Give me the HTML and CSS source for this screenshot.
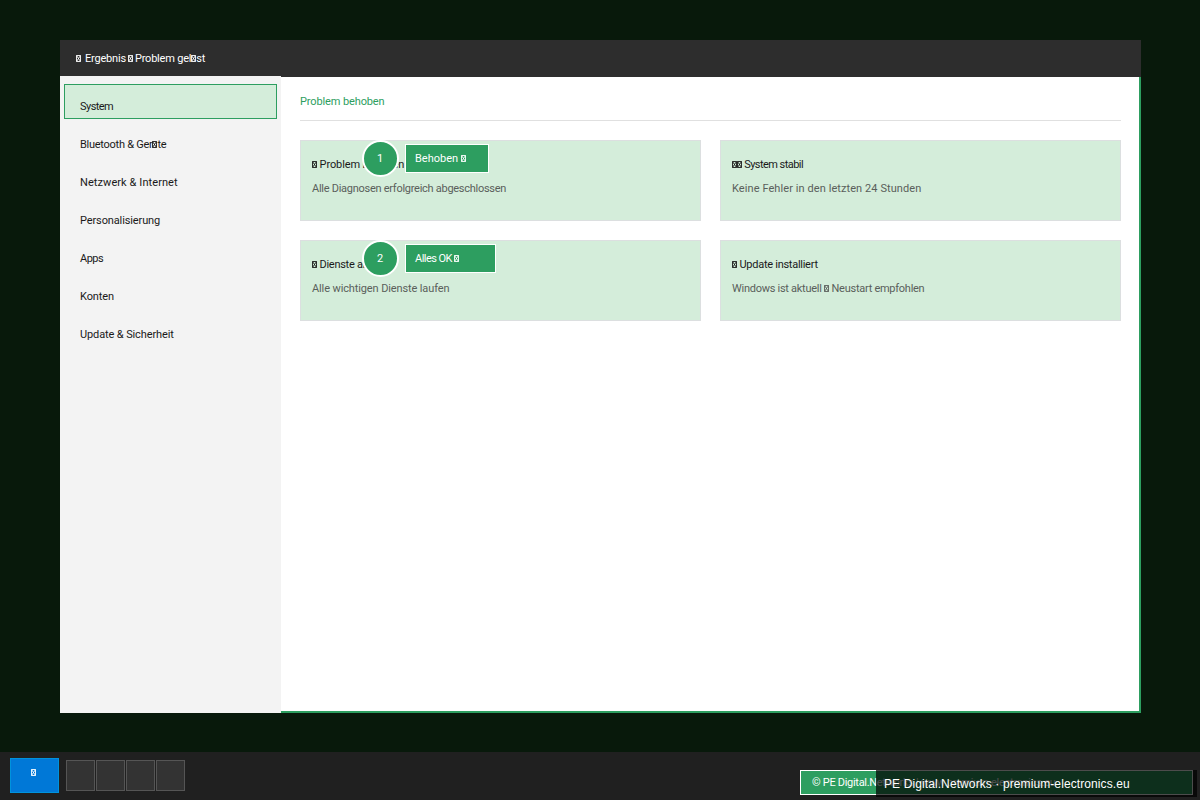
FILE: index.html
```html
<!DOCTYPE html>
<html lang="de">
<head>
    <meta charset="UTF-8">
    <meta name="viewport" content="width=device-width, initial-scale=1.0">
    <title>Problem gelöst</title>
    <link rel="stylesheet" href="styles.css">
</head>
<body>
    <svg class="defs">
        <symbol id="box" viewBox="0 0 5 7">
            <path d="M.5 .5h4v6h-4zM.5 .5l4 6M4.5 .5l-4 6" fill="none" stroke="currentColor" stroke-width=".9"/>
        </symbol>
    </svg>

    <div class="desktop">
        <div class="window">
            <div class="titlebar"><svg class="box lead"><use href="#box"/></svg>Ergebnis<svg class="box gap"><use href="#box"/></svg>Problem gel<svg class="box"><use href="#box"/></svg>st</div>
            <div class="window-body">
                <ul class="sidebar">
                    <li class="active tightest">System</li>
                    <li class="tighter">Bluetooth &amp; Ger<svg class="box"><use href="#box"/></svg>te</li>
                    <li class="loose">Netzwerk &amp; Internet</li>
                    <li class="tight">Personalisierung</li>
                    <li class="tightest">Apps</li>
                    <li class="tight">Konten</li>
                    <li class="tight">Update &amp; Sicherheit</li>
                </ul>
                <div class="content">
                    <h1 class="tight">Problem behoben</h1>
                    <div class="cards">
                        <div class="card">
                            <h2 class="tight"><svg class="box"><use href="#box"/></svg> Problem behoben</h2>
                            <p class="tighter">Alle Diagnosen erfolgreich abgeschlossen</p>
                            <div class="step"><span class="num">1</span><span class="label">Behoben <svg class="box"><use href="#box"/></svg></span></div>
                        </div>
                        <div class="card">
                            <h2 class="tightest"><svg class="box"><use href="#box"/></svg><svg class="box"><use href="#box"/></svg> System stabil</h2>
                            <p class="loose">Keine Fehler in den letzten 24 Stunden</p>
                        </div>
                        <div class="card">
                            <h2 class="tighter"><svg class="box"><use href="#box"/></svg> Dienste aktiv</h2>
                            <p class="tight">Alle wichtigen Dienste laufen</p>
                            <div class="step"><span class="num">2</span><span class="label wide tightest">Alles OK <svg class="box"><use href="#box"/></svg></span></div>
                        </div>
                        <div class="card">
                            <h2 class="tighter"><svg class="box"><use href="#box"/></svg> Update installiert</h2>
                            <p class="tighter">Windows ist aktuell <svg class="box"><use href="#box"/></svg> Neustart empfohlen</p>
                        </div>
                    </div>
                </div>
            </div>
        </div>
    </div>

    <div class="taskbar">
        <div class="start"><svg class="box"><use href="#box"/></svg></div>
        <div class="apps">
            <span></span>
            <span></span>
            <span></span>
            <span></span>
        </div>
        <div class="copyright">
            © PE Digital.Networks | www.premium-electronics.eu
            <div class="watermark">PE Digital.Networks · premium-electronics.eu</div>
        </div>
    </div>
</body>
</html>
```
FILE: styles.css
```css
*{
    margin: 0;
    padding: 0;
    box-sizing: border-box;
}

body{
    width: 1200px;
    height: 800px;
    overflow: hidden;
    display: flex;
    flex-direction: column;
    background: #08190b;
    color: #1a1a1a;
    font: 11px/14px Roboto, "Liberation Sans", sans-serif;
}

.loose{
    letter-spacing: .08px;
}

.tight{
    letter-spacing: -.12px;
}

.tighter{
    letter-spacing: -.27px;
}

.tightest{
    letter-spacing: -.55px;
}

.defs{
    position: absolute;
    width: 0;
    height: 0;
}

.box{
    width: 5px;
    height: 7px;
}

.desktop{
    height: 752px;
    padding: 40px 59px 39px 60px;
}

.window{
    height: 673px;
    display: flex;
    flex-direction: column;
    background: #fff;
}

.titlebar{
    height: 37px;
    padding: 12px 16px;
    background: #2d2d2d;
    color: #fff;
    letter-spacing: -.2px;
}

.titlebar .lead{
    margin-right: 4px;
}

.titlebar .gap{
    margin: 0 2px;
}

.window-body{
    flex: 1;
    display: flex;
}

.sidebar{
    width: 221px;
    margin-top: -1px;
    padding: 8px 4px;
    list-style: none;
    background: #f3f3f3;
}

.sidebar li{
    height: 35px;
    margin-bottom: 3px;
    padding: 15px 15px 0;
    border: 1px solid transparent;
}

.sidebar .active{
    background: #d4edda;
    border-color: #2d9e60;
}

.content{
    flex: 1;
    padding: 18px 18px 0 19px;
    border: solid #2d9e60;
    border-width: 0 2px 2px 0;
}

.content h1{
    height: 26px;
    border-bottom: 1px solid #e0e0e0;
    color: #2d9e60;
    font-size: 11px;
    font-weight: normal;
}

.cards{
    margin-top: 19px;
    display: grid;
    grid-template-columns: 401px 401px;
    gap: 19px;
}

.card{
    position: relative;
    height: 81px;
    padding: 17px 11px 0;
    background: #d4edda;
    border: 1px solid #dcdfe0;
}

.card h2{
    font-size: 11px;
    font-weight: normal;
}

.card p{
    margin-top: 10px;
    color: #5a5f5b;
}

/* numbered marker lying over the card */
.step{
    position: absolute;
    left: 61px;
    top: -1px;
    display: flex;
    align-items: center;
    gap: 6px;
    color: #fff;
}

.num{
    width: 37px;
    height: 37px;
    padding-right: 1px;
    border: 2px solid #fff;
    border-radius: 50%;
    background: #2d9e60;
    line-height: 33px;
    text-align: center;
}

.label{
    width: 84px;
    height: 29px;
    padding-left: 9px;
    border: 1px solid #fff;
    background: #2d9e60;
    line-height: 27px;
}

.label.wide{
    width: 91px;
}

.taskbar{
    height: 48px;
    display: flex;
    align-items: flex-start;
    padding: 6px 7px 0 10px;
    background: #202020;
    color: #fff;
}

.start{
    width: 49px;
    height: 35px;
    padding-left: 20px;
    border: 1px solid #0093dd;
    background: #0078d7;
    line-height: 27px;
}

.apps{
    display: flex;
    gap: 1px;
    margin: 2px 0 0 7px;
}

.apps span{
    width: 29px;
    height: 31px;
    border: 1px solid #555;
    background: #333;
}

.copyright{
    position: relative;
    width: 393px;
    height: 25px;
    margin: 12px 0 0 auto;
    padding-left: 11px;
    border: 1px solid #fff;
    background: #2d9e60;
    line-height: 23px;
    letter-spacing: -.3px;
}

/* overlay tag across the right end of the copyright bar */
.watermark{
    position: absolute;
    left: 75px;
    top: -1px;
    width: 321px;
    height: 27px;
    padding-left: 8px;
    background: rgba(0, 0, 0, .7);
    font: 12px/28px "Liberation Sans", Arial, sans-serif;
    letter-spacing: .1px;
}
```
